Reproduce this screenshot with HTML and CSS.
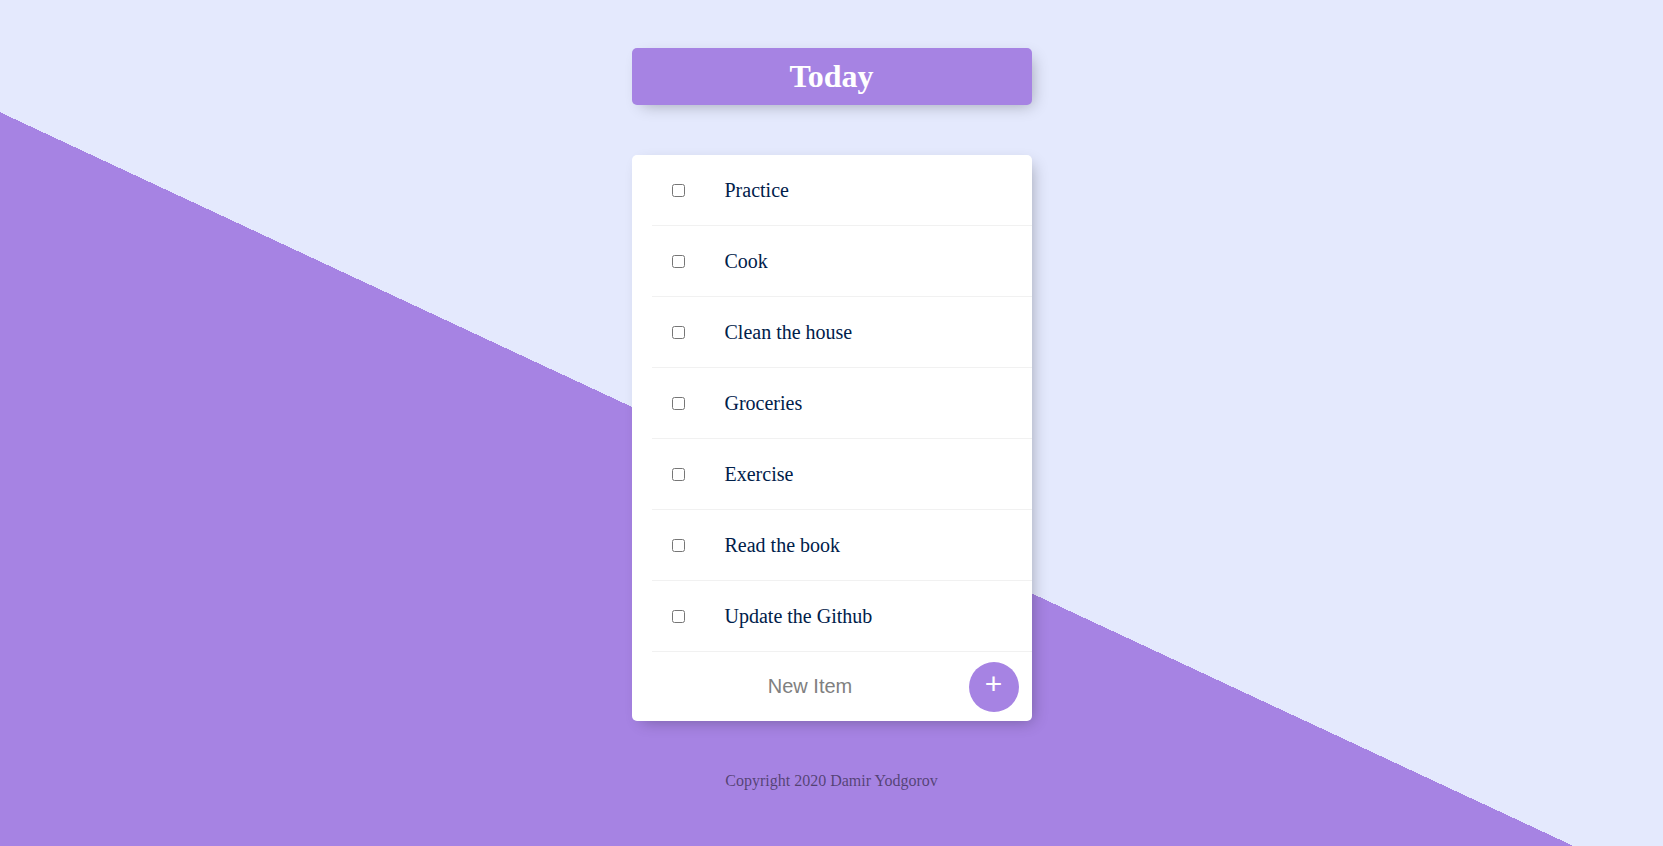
FILE: index.html
```html
<!DOCTYPE html>
<html lang="en">
<head>
<meta charset="utf-8">
<title>To-Do List</title>
<link rel="stylesheet" href="styles.css">
</head>
<body>
  <div class="box heading">
    <h1>Today</h1>
  </div>
  <div class="box list">
    <div class="item"><input type="checkbox"><p>Practice</p></div>
    <div class="item"><input type="checkbox"><p>Cook</p></div>
    <div class="item"><input type="checkbox"><p>Clean the house</p></div>
    <div class="item"><input type="checkbox"><p>Groceries</p></div>
    <div class="item"><input type="checkbox"><p>Exercise</p></div>
    <div class="item"><input type="checkbox"><p>Read the book</p></div>
    <div class="item"><input type="checkbox"><p>Update the Github</p></div>
    <form class="add-row">
      <input class="new-item" type="text" name="newItem" placeholder="New Item" autocomplete="off">
      <button class="add-btn" type="button">+</button>
    </form>
  </div>
  <footer class="footer">Copyright 2020 Damir Yodgorov</footer>
</body>
</html>
```
FILE: styles.css
```css
html {
  height: 100%;
  overflow: hidden;
  background-color: #E4E9FD;
  background-image: linear-gradient(25deg, #A683E3 50%, #E4E9FD 50%);
  background-size: 100% 1000px;
  background-repeat: no-repeat;
}

body {
  margin: 0;
  padding-top: 48px;
  font-family: "Liberation Serif", "Times New Roman", serif;
}

.box {
  width: 400px;
  margin: 0 auto;
  background: #ffffff;
  border-radius: 5px;
  box-shadow: 5px 5px 15px -5px rgba(0, 0, 0, 0.3);
}

.heading {
  background-color: #A683E3;
  text-align: center;
}

.heading h1 {
  margin: 0;
  padding: 10px;
  color: #ffffff;
  font-size: 32px;
  font-weight: bold;
  line-height: normal;
}

.list {
  margin-top: 50px;
}

.item {
  margin-left: 20px;
  height: 70px;
  display: flex;
  align-items: center;
  border-bottom: 1px solid #F1F1F1;
}

.item input[type="checkbox"] {
  width: 13px;
  height: 13px;
  margin: 0 20px;
  flex: none;
}

.item p {
  margin: 0;
  padding: 0 20px;
  font-size: 20px;
  color: #00204a;
}

.add-row {
  margin: 0 0 0 20px;
  height: 69px;
  display: flex;
  align-items: center;
}

.new-item {
  box-sizing: border-box;
  width: 317px;
  height: 60px;
  padding: 1px 2px;
  border: none;
  background: transparent;
  text-align: center;
  font-family: "Liberation Sans", Arial, sans-serif;
  font-size: 20px;
  color: #333;
}

.new-item::placeholder {
  color: grey;
  opacity: 1;
}

.new-item:focus {
  outline: none;
}

.add-btn {
  width: 50px;
  height: 50px;
  flex: none;
  border-radius: 50%;
  border: 0;
  background-color: #A683E3;
  color: #ffffff;
  font-family: "Liberation Sans", Arial, sans-serif;
  font-size: 30px;
  line-height: 1;
  padding: 0 0 6px 0;
}

.footer {
  margin-top: 51px;
  text-align: center;
  color: rgba(0, 0, 0, 0.5);
  font-size: 16px;
}
```
